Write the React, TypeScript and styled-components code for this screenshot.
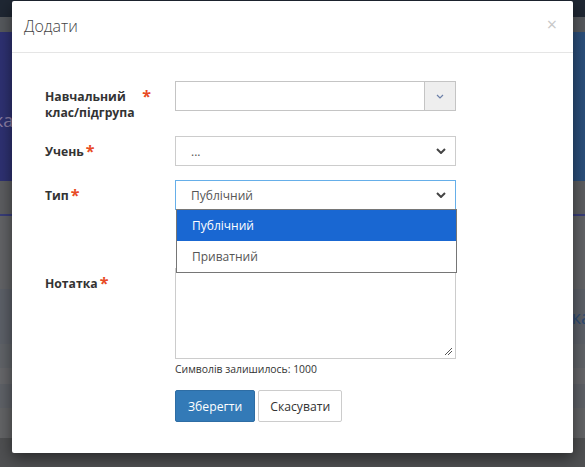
import React from 'react';
import styled, { createGlobalStyle } from 'styled-components';

const GlobalStyle = createGlobalStyle`
  html, body { margin: 0; padding: 0; }
  body {
    width: 585px;
    height: 467px;
    overflow: hidden;
    font-family: "Open Sans", "Liberation Sans", sans-serif;
    background: #5f6063;
  }
`;

const Page = styled.div`
  position: relative;
  width: 585px;
  height: 467px;
  overflow: hidden;
`;

const Backdrop = styled.div`
  display: flex;
  flex-direction: column;
`;

const Band = styled.div<{ h: number; bg: string; line?: string; top?: number }>`
  height: ${p => p.h}px;
  box-sizing: border-box;
  background: ${p => p.bg};
  border-bottom: ${p => (p.line ? `2px solid ${p.line}` : 'none')};
  display: flex;
  align-items: ${p => (p.top !== undefined ? 'flex-start' : 'center')};
  padding-top: ${p => p.top ?? 0}px;
  font-size: 18px;
`;

const BandText = styled.span<{ right?: boolean }>`
  color: ${p => (p.right ? '#2d4b74' : '#8b7fa6')};
  margin-left: ${p => (p.right ? 'auto' : '-6px')};
  margin-right: ${p => (p.right ? '-6px' : '0')};
`;

const Modal = styled.div`
  position: absolute;
  left: 12px;
  top: 1px;
  width: 561px;
  height: 452px;
  background: #fff;
  border-radius: 2px;
  box-shadow: 0 5px 15px rgba(0, 0, 0, 0.5);
  display: flex;
  flex-direction: column;
`;

const Header = styled.div`
  height: 51px;
  border-bottom: 1px solid #e5e5e5;
  display: flex;
  align-items: center;
  justify-content: space-between;
  padding: 0 16px 0 12px;
`;

const Title = styled.h4`
  margin: 0;
  font-size: 16px;
  font-weight: 300;
  color: #444;
  margin-top: -2px;
`;

const Close = styled.span`
  font-size: 18px;
  color: #c8c8c8;
  font-weight: 400;
  margin-top: -6px;
`;

const Body = styled.div`
  padding: 28px 0 0 33px;
  display: flex;
  flex-direction: column;
`;

const Row = styled.div<{ mb: number }>`
  display: grid;
  grid-template-columns: 106px 281px;
  column-gap: 24px;
  margin-bottom: ${p => p.mb}px;
  position: relative;
`;

const Label = styled.label`
  display: flex;
  align-items: flex-start;
  font-size: 12.2px;
  font-weight: 700;
  color: #333;
  line-height: 16px;
  padding-top: 8px;
`;

const LabelText = styled.span<{ w?: number }>`
  ${p => (p.w ? `width: ${p.w}px;` : '')}
`;

const Star = styled.span`
  color: #e84b25;
  font-size: 16px;
  margin-left: 2px;
  line-height: 14px;
`;

const Select2Box = styled.div`
  height: 30px;
  box-sizing: border-box;
  border: 1px solid #c4c4c4;
  display: flex;
`;

const Select2Arrow = styled.div`
  margin-left: auto;
  width: 30px;
  border-left: 1px solid #c4c4c4;
  background: #eee;
  display: flex;
  align-items: center;
  justify-content: center;
`;

const SelectBox = styled.div<{ focus?: boolean }>`
  height: 30px;
  box-sizing: border-box;
  border: 1px solid ${p => (p.focus ? '#66afe9' : '#ccc')};
  display: flex;
  align-items: center;
  padding: 0 9px 0 15px;
  font-size: 12px;
  color: #555;
`;

const Chevron = styled.svg`
  margin-left: auto;
`;

const Dropdown = styled.div`
  position: absolute;
  left: 131px;
  top: 29px;
  width: 281px;
  box-sizing: border-box;
  border: 1px solid #767676;
  background: #fff;
  z-index: 2;
`;

const Option = styled.div<{ active?: boolean }>`
  height: 31px;
  display: flex;
  align-items: center;
  padding-left: 15px;
  font-size: 12px;
  background: ${p => (p.active ? '#1967d2' : '#fff')};
  color: ${p => (p.active ? '#fff' : '#555')};
`;

const TextArea = styled.div`
  height: 91px;
  box-sizing: border-box;
  border: 1px solid #ccc;
  position: relative;
`;

const Grip = styled.svg`
  position: absolute;
  right: 2px;
  bottom: 2px;
`;

const Hint = styled.div`
  margin: 3px 0 0 0;
  font-size: 10.4px;
  color: #333;
`;

const Buttons = styled.div`
  display: flex;
  gap: 3px;
  margin-top: 14px;
`;

const Button = styled.button<{ primary?: boolean }>`
  height: 32px;
  box-sizing: border-box;
  padding: 0 ${p => (p.primary ? 12 : 11)}px;
  font-family: inherit;
  font-size: 12.2px;
  border-radius: 2px;
  border: 1px solid ${p => (p.primary ? '#2e6da4' : '#ccc')};
  background: ${p => (p.primary ? '#337ab7' : '#fff')};
  color: ${p => (p.primary ? '#fff' : '#333')};
`;

const Down = ({ color, size = 10, sw = 2 }: { color: string; size?: number; sw?: number }) => (
  <Chevron width={size} height={size * 0.6} viewBox="0 0 10 6">
    <path d="M1 1 L5 5 L9 1" fill="none" stroke={color} strokeWidth={sw} />
  </Chevron>
);

export default function App() {
  return (
    <>
      <GlobalStyle />
      <Page>
        <Backdrop>
          <Band h={17} bg="#1f2733" />
          <Band h={15} bg="#56595d" />
          <Band h={149} top={76} bg="linear-gradient(90deg, #2e3172 0%, #2d3c76 50%, #2b4f7b 100%)">
            <BandText>ка</BandText>
          </Band>
          <Band h={35} bg="#5c5d60" line="#383d79" />
          <Band h={73} bg="#626366" />
          <Band h={55} bg="#5c6068">
            <BandText right>ка</BandText>
          </Band>
          <Band h={24} bg="#606368" />
          <Band h={16} bg="#66676a" />
          <Band h={24} bg="#5e6167" />
          <Band h={30} bg="#636466" />
          <Band h={40} bg="#4f5052" />
        </Backdrop>
        <Modal>
          <Header>
            <Title>Додати</Title>
            <Close>×</Close>
          </Header>
          <Body>
            <Row mb={15}>
              <Label>
                <LabelText w={96}>Навчальний клас/підгрупа</LabelText>
                <Star>*</Star>
              </Label>
              <Select2Box>
                <Select2Arrow>
                  <svg width="8" height="5" viewBox="0 0 8 5">
                    <path d="M1 1 L4 4 L7 1" fill="none" stroke="#6b7fa8" strokeWidth="1.2" />
                  </svg>
                </Select2Arrow>
              </Select2Box>
            </Row>
            <Row mb={14}>
              <Label>
                <LabelText>Учень</LabelText>
                <Star>*</Star>
              </Label>
              <SelectBox>
                ...
                <Down color="#444" />
              </SelectBox>
            </Row>
            <Row mb={58}>
              <Label>
                <LabelText>Тип</LabelText>
                <Star>*</Star>
              </Label>
              <SelectBox focus>
                Публічний
                <Down color="#444" />
              </SelectBox>
              <Dropdown>
                <Option active>Публічний</Option>
                <Option>Приватний</Option>
              </Dropdown>
            </Row>
            <Row mb={0}>
              <Label>
                <LabelText>Нотатка</LabelText>
                <Star>*</Star>
              </Label>
              <div>
                <TextArea>
                  <Grip width="9" height="9" viewBox="0 0 9 9">
                    <path d="M1 8 L8 1 M4 8 L8 4" stroke="#555" strokeWidth="1" />
                  </Grip>
                </TextArea>
                <Hint>Символів залишилось: 1000</Hint>
                <Buttons>
                  <Button primary>Зберегти</Button>
                  <Button>Скасувати</Button>
                </Buttons>
              </div>
            </Row>
          </Body>
        </Modal>
      </Page>
    </>
  );
}
